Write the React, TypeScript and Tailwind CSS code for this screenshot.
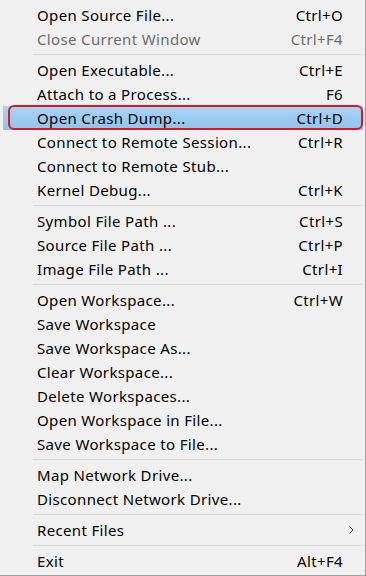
type Item =
  | { kind: "sep" }
  | { kind: "item"; label: string; shortcut?: string; disabled?: boolean; active?: boolean; sub?: boolean };

const items: Item[] = [
  { kind: "item", label: "Open Source File...", shortcut: "Ctrl+O" },
  { kind: "item", label: "Close Current Window", shortcut: "Ctrl+F4", disabled: true },
  { kind: "sep" },
  { kind: "item", label: "Open Executable...", shortcut: "Ctrl+E" },
  { kind: "item", label: "Attach to a Process...", shortcut: "F6" },
  { kind: "item", label: "Open Crash Dump...", shortcut: "Ctrl+D", active: true },
  { kind: "item", label: "Connect to Remote Session...", shortcut: "Ctrl+R" },
  { kind: "item", label: "Connect to Remote Stub..." },
  { kind: "item", label: "Kernel Debug...", shortcut: "Ctrl+K" },
  { kind: "sep" },
  { kind: "item", label: "Symbol File Path ...", shortcut: "Ctrl+S" },
  { kind: "item", label: "Source File Path ...", shortcut: "Ctrl+P" },
  { kind: "item", label: "Image File Path ...", shortcut: "Ctrl+I" },
  { kind: "sep" },
  { kind: "item", label: "Open Workspace...", shortcut: "Ctrl+W" },
  { kind: "item", label: "Save Workspace" },
  { kind: "item", label: "Save Workspace As..." },
  { kind: "item", label: "Clear Workspace..." },
  { kind: "item", label: "Delete Workspaces..." },
  { kind: "item", label: "Open Workspace in File..." },
  { kind: "item", label: "Save Workspace to File..." },
  { kind: "sep" },
  { kind: "item", label: "Map Network Drive..." },
  { kind: "item", label: "Disconnect Network Drive..." },
  { kind: "sep" },
  { kind: "item", label: "Recent Files", sub: true },
  { kind: "sep" },
  { kind: "item", label: "Exit", shortcut: "Alt+F4" },
];

export default function App() {
  return (
    <div
      className="w-[366px] h-[576px] bg-[#f0f0f0] border-r border-b border-[#a0a0a0] pt-[3px] text-[15px] tracking-[0.35px] text-black"
      style={{ fontFamily: '"Noto Sans", "Open Sans", sans-serif' }}
    >
      {items.map((it, i) =>
        it.kind === "sep" ? (
          <div key={i} className="h-[7px] flex items-center pl-[33px] pr-[2px]">
            <div className="h-px w-full bg-[#d7d7d7]" />
          </div>
        ) : (
          <div
            key={i}
            className={
              "relative flex items-center h-6 ml-[3px] mr-[2px] pl-[34px] " +
              (it.active ? "bg-gradient-to-b from-[#a9d4f5] to-[#8fc3ee] " : "") +
              (it.disabled ? "text-[#6d6d6d]" : "")
            }
          >
            <span className="flex-1 whitespace-nowrap">{it.label}</span>
            {it.shortcut && <span className="whitespace-nowrap">{it.shortcut}</span>}
            <span className="w-5 pl-[6px] flex items-center">
              {it.sub && (
                <svg width="5" height="8" viewBox="0 0 5 8" fill="none">
                  <path d="M0.5 0.5 L4 4 L0.5 7.5" stroke="#444" strokeWidth="1" />
                </svg>
              )}
            </span>
            {it.active && (
              <div className="absolute left-[5px] right-0 -top-px bottom-0 border-2 border-[#e5121c] rounded-[6px]" />
            )}
          </div>
        )
      )}
    </div>
  );
}
